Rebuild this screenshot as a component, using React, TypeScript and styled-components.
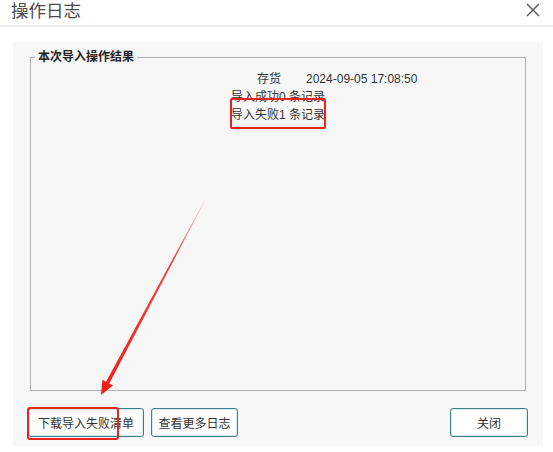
import React from "react";
import styled, { createGlobalStyle } from "styled-components";

const GlobalStyle = createGlobalStyle`
  html, body {
    margin: 0;
    padding: 0;
    background: #fff;
  }
  body {
    font-family: "Liberation Sans", "Noto Sans CJK SC", sans-serif;
    color: #333;
  }
`;

const Dialog = styled.div`
  width: 553px;
  height: 452px;
  display: flex;
  flex-direction: column;
  background: #fff;
`;

const Header = styled.div`
  height: 25px;
  border-bottom: 2px solid #ececec;
  display: flex;
  align-items: center;
  justify-content: space-between;
  padding: 0 13px 0 11px;
`;

const Title = styled.h3`
  margin: 0;
  font-size: 17.5px;
  font-weight: normal;
  color: #4a4a4a;
  line-height: 22px;
  margin-top: -3px;
`;

const CloseIcon = styled.button`
  border: none;
  background: none;
  padding: 0;
  width: 14px;
  height: 14px;
  margin-top: -6px;
  display: flex;
  cursor: pointer;
`;

const Body = styled.div`
  padding: 15px 10px 0 13px;
`;

const Panel = styled.div`
  position: relative;
  height: 404px;
  box-sizing: border-box;
  background: #f7f7f7;
  padding: 7px 15px 9px;
  display: flex;
  flex-direction: column;
`;

const Group = styled.fieldset`
  flex: 1;
  margin: 0 2px;
  padding: 0;
  border: 1px solid #b3b3b3;
  min-width: 0;
`;

const Legend = styled.legend`
  margin-left: 4px;
  padding: 0 3px;
  font-size: 12px;
  line-height: 16px;
  font-weight: bold;
  color: #222;
`;

const Result = styled.div`
  padding-top: 5px;
  font-size: 12px;
  line-height: 18px;
  color: #333;
`;

const Row = styled.div<{ $center?: boolean }>`
  text-align: ${(p) => (p.$center ? "center" : "left")};
  padding-left: ${(p) => (p.$center ? "0" : "226px")};
  display: ${(p) => (p.$center ? "block" : "flex")};
  gap: 25px;
`;

const Marked = styled.span`
  position: relative;
  display: inline-block;
  &::after {
    content: "";
    position: absolute;
    left: -1px;
    right: -1px;
    top: -8px;
    bottom: -5px;
    border: 2.5px solid #e8241f;
    border-radius: 2px;
  }
`;

const Actions = styled.div`
  display: flex;
  gap: 7px;
  margin-top: 17px;
`;

const Button = styled.button<{ $w: number; $marked?: boolean }>`
  position: relative;
  width: ${(p) => p.$w}px;
  height: 29px;
  padding: 0;
  border: 1px solid #3f7e89;
  border-radius: 3px;
  background: #fff;
  box-shadow: inset 0 0 0 1px #d6ebee;
  font-family: inherit;
  font-size: 12px;
  color: #333;
  cursor: pointer;
  &:last-child {
    margin-left: auto;
  }
  ${(p) =>
    p.$marked &&
    `
    &::after {
      content: "";
      position: absolute;
      left: -2px;
      top: -2px;
      width: 88px;
      bottom: -4px;
      border: 2.5px solid #e8241f;
      border-radius: 3px;
    }
  `}
`;

const Arrow = styled.svg`
  position: absolute;
  left: 72px;
  top: 116px;
  width: 125px;
  height: 240px;
  pointer-events: none;
`;

export default function App() {
  return (
    <Dialog>
      <GlobalStyle />
      <Header>
        <Title>操作日志</Title>
        <CloseIcon aria-label="关闭">
          <svg width="14" height="14" viewBox="0 0 14 14">
            <path d="M1 1 L13 13 M13 1 L1 13" stroke="#555" strokeWidth="1.4" fill="none" />
          </svg>
        </CloseIcon>
      </Header>
      <Body>
        <Panel>
          <Group>
            <Legend>本次导入操作结果</Legend>
            <Result>
              <Row>
                <span>存货</span>
                <span>2024-09-05 17:08:50</span>
              </Row>
              <Row $center>导入成功0 条记录</Row>
              <Row $center>
                <Marked>导入失败1 条记录</Marked>
              </Row>
            </Result>
          </Group>
          <Actions>
            <Button $w={116} $marked>下载导入失败清单</Button>
            <Button $w={87}>查看更多日志</Button>
            <Button $w={78}>关闭</Button>
          </Actions>
          <Arrow viewBox="0 0 125 240">
            <defs>
              <linearGradient id="arrowFade" x1="120" y1="42" x2="16" y2="237" gradientUnits="userSpaceOnUse">
                <stop offset="0" stopColor="#f2302a" stopOpacity="0.15" />
                <stop offset="0.3" stopColor="#f2302a" stopOpacity="0.9" />
                <stop offset="1" stopColor="#f21c14" />
              </linearGradient>
            </defs>
            <polygon
              points="120.3,42.1 24.3,225.6 28,227.6 16,237 17.4,221.8 21.1,223.8 119.7,41.9"
              fill="url(#arrowFade)"
            />
          </Arrow>
        </Panel>
      </Body>
    </Dialog>
  );
}
